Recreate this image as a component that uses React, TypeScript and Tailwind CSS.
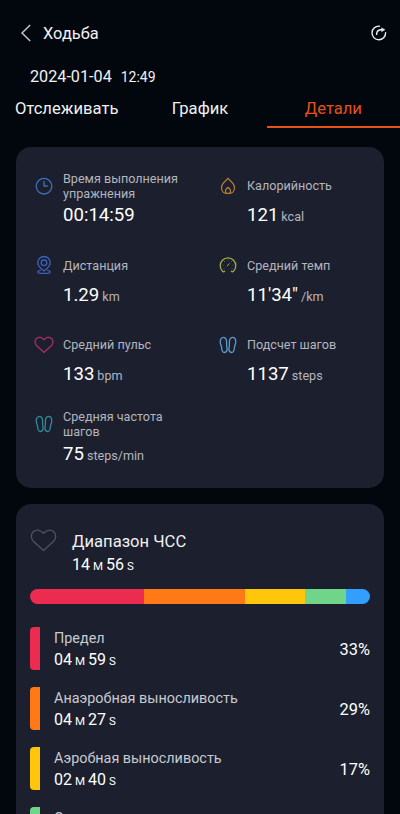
import * as React from "react";

type IconProps = { className?: string };

const svgProps = {
  viewBox: "0 0 20 20",
  fill: "none",
  stroke: "currentColor",
  strokeWidth: 1.3,
  strokeLinecap: "round",
  strokeLinejoin: "round",
} as const;

const ClockIcon = ({ className }: IconProps) => (
  <svg {...svgProps} className={className}>
    <circle cx="10" cy="10.2" r="7.8" />
    <path d="M10 5.5V10h3.3" />
  </svg>
);

const FlameIcon = ({ className }: IconProps) => (
  <svg {...svgProps} className={className}>
    <path d="M10 2.3c1 2 6.5 4.6 6.5 9.2 0 3.6-2.3 5.9-5 5.9h-3c-2.7 0-5-2.3-5-5.9C3.5 6.9 9 4.3 10 2.3Z" />
    <path d="M8.4 17.2c-1.2-.9-1.2-3.2-.1-4.3.7-.6 1.3-.9 1.7-1.5.4.6 1 .9 1.7 1.5 1.1 1.1 1.1 3.4-.1 4.3" />
  </svg>
);

const PinIcon = ({ className }: IconProps) => (
  <svg {...svgProps} className={className}>
    <path d="M10 16c-2.500-1.900-6.200-4.600-6.200-8.300a6.200 6.200 0 0 1 12.400 0c0 3.700-3.700 6.400-6.200 8.300Z" />
    <circle cx="10" cy="7.8" r="2.8" />
    <path d="M6.300 15.300c-3.600.8-3 3 0 3h7.400c3 0 3.600-2.200 0-3" />
  </svg>
);

const GaugeIcon = ({ className }: IconProps) => (
  <svg {...svgProps} className={className}>
    <path d="M6.600 16.200c-.6.900-1.300.9-2 .1a7.800 7.800 0 1 1 10.800 0c-.7.8-1.400.8-2-.1" />
    <path
      d="M5.100 10.200h.1M6.500 6.700h.1M10 5.200h.1M13.500 6.700h.1M14.900 10.200h.1M6 13.500h.1M14 13.500h.1"
      strokeWidth={1}
      opacity={0.5}
    />
    <path d="M9.300 10.900l2-2.200" strokeWidth={1} />
  </svg>
);

const HeartIcon = ({ className }: IconProps) => (
  <svg {...svgProps} className={className}>
    <path d="M10 17.400 2.500 10.600C.4 8.300.6 5 2.500 3.400 4.900 1.600 8.200 2.200 10 4.800c1.800-2.600 5.100-3.200 7.500-1.400 1.900 1.600 2.100 4.900 0 7.200L10 17.400Z" />
  </svg>
);

const StepsIcon = ({ className }: IconProps) => (
  <svg {...svgProps} className={className}>
    <path d="M5.500 2.400C3.300 2.400 2.200 4.600 2.200 7c0 2.400 1.400 3.900 1.500 6 .1 2.600 1 4.500 2.800 4.500s2.600-1.400 2.600-3.400c0-1.800-.7-2.800-.5-5.200.3-3.500-.6-6.500-3.100-6.500Z" />
    <path d="M14.500 2.400c2.200 0 3.300 2.200 3.300 4.600 0 2.400-1.400 3.900-1.500 6-.1 2.600-1 4.500-2.800 4.500s-2.600-1.400-2.600-3.400c0-1.800.7-2.800.5-5.200-.3-3.500.6-6.500 3.100-6.500Z" />
  </svg>
);

const ShareIcon = ({ className }: IconProps) => (
  <svg {...svgProps} strokeWidth={1.4} className={className}>
    <path d="M10.400 3.200a6.800 6.800 0 1 0 6.200 6.600" />
    <path d="M7.600 11.400c0-2.900 1.800-4.600 5-4.600" />
    <path d="M12.800 5 15.900 6.800l-3.100 1.800Z" fill="currentColor" strokeWidth={0.5} />
  </svg>
);

const Duration = ({ m, s }: { m: string; s: string }) => (
  <p className="flex items-baseline text-base leading-5 text-white">
    {m}
    <span className="mx-[3px] text-[11.5px]">M</span>
    {s}
    <span className="ml-[3px] text-[11.5px]">S</span>
  </p>
);

const App = () => {
  return (
    <main className="h-[814px] overflow-hidden bg-[#02060d] font-[Roboto,sans-serif] text-[#f0f1f3]">
      <header className="flex h-[67px] items-center pl-5 pr-[11px]">
        <svg
          viewBox="0 0 12 18"
          fill="none"
          stroke="currentColor"
          strokeWidth="1.4"
          className="mb-px h-[18px] w-3 text-[#c9cbcf]"
        >
          <path d="M10.200 1 2 9l8.200 8" />
        </svg>
        <h1 className="ml-[11px] flex-1 pt-px text-[16.4px]">Ходьба</h1>
        <ShareIcon className="mb-px size-5" />
      </header>
      <div className="flex h-5 items-baseline pl-[30px]">
        <span className="text-[16.2px] leading-5">2024-01-04</span>
        <span className="ml-[9px] text-sm leading-5">12:49</span>
      </div>
      <nav className="grid grid-cols-3 text-center text-[16.6px]">
        {tabs.map((tab) => (
          <button
            key={tab.title}
            className={
              tab.active
                ? "h-[41px] border-b-2 border-[#e65019] pt-[5px] text-[#e65019]"
                : "h-[41px] border-b-2 border-transparent pt-[5px]"
            }
          >
            {tab.title}
          </button>
        ))}
      </nav>
      <section className="mx-4 mt-[19px] grid h-[341px] auto-rows-[79.5px] grid-cols-[184px_1fr] content-start rounded-[15px] bg-[#1b1f2e] pl-[18px] pt-[23px]">
        {stats.map((item) => (
          <div key={item.title}>
            <div className="flex h-[31px] items-center">
              <item.icon className={item.color} />
              <p className="ml-[9px] w-[125px] text-[12.6px] leading-[15px] text-[#b4b6bd]">
                {item.title}
              </p>
            </div>
            <p className="ml-[29px] mt-px text-[18.6px] leading-[27px] text-white">
              {item.value}
              {item.unit && (
                <span className="ml-[3px] text-[12.6px] text-[#b4b6bd]">
                  {item.unit}
                </span>
              )}
            </p>
          </div>
        ))}
      </section>
      <section className="mx-4 mt-4 h-[340px] rounded-t-[15px] bg-[#1b1f2e] px-[14px] pt-[26px]">
        <div className="flex">
          <HeartIcon className="-mt-[3px] h-[27px] w-[27px] text-[#50535f] [stroke-width:1]" />
          <div className="ml-[15px]">
            <h2 className="mb-px text-[16.6px] leading-6">Диапазон ЧСС</h2>
            <Duration m="14" s="56" />
          </div>
        </div>
        <div className="mt-[13px] flex h-[15px] overflow-hidden rounded-full">
          <div className="w-[114px] bg-[#ec2b51]" />
          <div className="w-[101px] bg-[#ff7a17]" />
          <div className="w-[60px] bg-[#ffc60c]" />
          <div className="w-[41px] bg-[#70d588]" />
          <div className="flex-1 bg-[#339ffd]" />
        </div>
        <ul className="mt-[23px] flex flex-col gap-[17px]">
          {zones.map((zone) => (
            <li key={zone.title} className="flex h-[43px] items-center">
              <span className={`h-[43px] w-[10px] rounded-l ${zone.color}`} />
              <div className="ml-[14px] flex-1 pt-px">
                <p className="text-[14.4px] leading-[22px] text-[#c9cbd0]">
                  {zone.title}
                </p>
                <Duration m={zone.m} s={zone.s} />
              </div>
              <span className="pt-1 text-[16.4px] text-white">
                {zone.percent}
              </span>
            </li>
          ))}
        </ul>
      </section>
    </main>
  );
};

export default App;

const tabs = [
  { title: "Отслеживать", active: false },
  { title: "График", active: false },
  { title: "Детали", active: true },
];

const stats = [
  {
    title: "Время выполнения упражнения",
    value: "00:14:59",
    unit: "",
    icon: ClockIcon,
    color: "size-5 text-[#3b72bd]",
  },
  {
    title: "Калорийность",
    value: "121",
    unit: "kcal",
    icon: FlameIcon,
    color: "size-5 text-[#b57d35]",
  },
  {
    title: "Дистанция",
    value: "1.29",
    unit: "km",
    icon: PinIcon,
    color: "size-5 text-[#3c62bb]",
  },
  {
    title: "Средний темп",
    value: "11'34\"",
    unit: "/km",
    icon: GaugeIcon,
    color: "size-5 text-[#a4ad4c]",
  },
  {
    title: "Средний пульс",
    value: "133",
    unit: "bpm",
    icon: HeartIcon,
    color: "size-5 text-[#a82f68]",
  },
  {
    title: "Подсчет шагов",
    value: "1137",
    unit: "steps",
    icon: StepsIcon,
    color: "size-5 text-[#5d9ccf]",
  },
  {
    title: "Средняя частота шагов",
    value: "75",
    unit: "steps/min",
    icon: StepsIcon,
    color: "size-5 text-[#2e8c9b]",
  },
];

const zones = [
  { title: "Предел", m: "04", s: "59", percent: "33%", color: "bg-[#ec2b51]" },
  {
    title: "Анаэробная выносливость",
    m: "04",
    s: "27",
    percent: "29%",
    color: "bg-[#ff7a17]",
  },
  {
    title: "Аэробная выносливость",
    m: "02",
    s: "40",
    percent: "17%",
    color: "bg-[#ffc60c]",
  },
  {
    title: "Сжигание жира",
    m: "01",
    s: "48",
    percent: "12%",
    color: "bg-[#70d588]",
  },
];
